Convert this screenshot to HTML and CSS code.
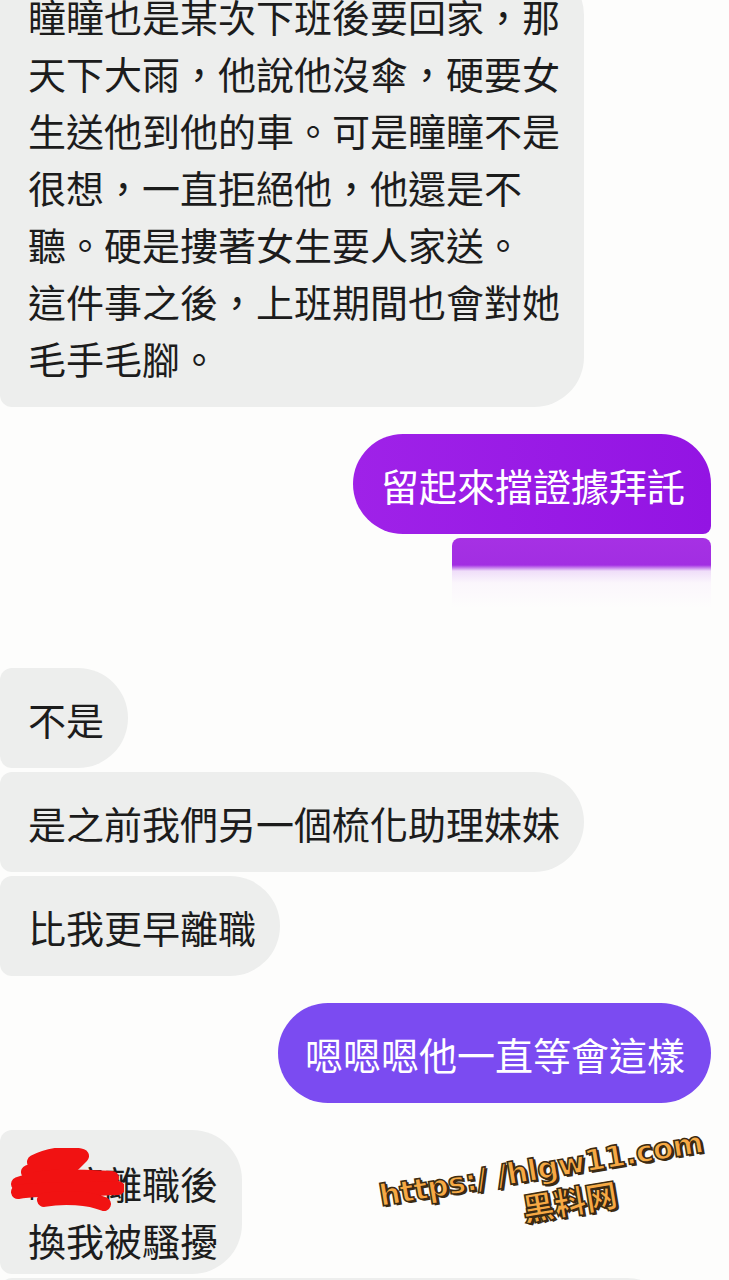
FILE: index.html
```html
<!DOCTYPE html>
<html lang="zh-Hant">
<head>
  <meta charset="UTF-8">
  <title>聊天紀錄</title>
  <link rel="stylesheet" href="styles.css">
</head>
<body>

<div class="screen">
  <div class="chat">

    <div class="group in">
      <div class="bubble gray">瞳瞳也是某次下班後要回家，那<br>天下大雨，他說他沒傘，硬要女<br>生送他到他的車。可是瞳瞳不是<br>很想，一直拒絕他，他還是不<br>聽。硬是摟著女生要人家送。<br>這件事之後，上班期間也會對她<br>毛手毛腳。</div>
    </div>

    <div class="group out">
      <div class="bubble violet">留起來擋證據拜託</div>
      <div class="smear"></div>
    </div>

    <div class="group in">
      <div class="bubble gray">不是</div>
      <div class="bubble gray">是之前我們另一個梳化助理妹妹</div>
      <div class="bubble gray">比我更早離職</div>
    </div>

    <div class="group out">
      <div class="bubble indigo">嗯嗯嗯他一直等會這樣</div>
    </div>

    <div class="group in">
      <div class="bubble gray tight">
        瞳瞳離職後<br>換我被騷擾
        <svg class="scribble" width="120" height="70" viewBox="0 0 120 70">
          <path d="M30 14 C45 6 65 4 78 8 L70 16 C55 14 40 18 24 24" />
          <path d="M14 36 C40 26 70 28 108 30 C90 34 60 36 30 40" />
          <path d="M14 44 C40 40 80 42 114 40" />
          <path d="M40 52 C60 48 85 50 100 56" />
        </svg>
      </div>
      <div class="bubble gray wide"></div>
    </div>

  </div>

  <div class="watermark">
    <div class="wm-url">https:/ /hlgw11.com</div>
    <div class="wm-name">黑料网</div>
  </div>
</div>

</body>
</html>
```

FILE: styles.css
```css
body {
  margin: 0;
  background: #fdfdfc;
  font-family: "Noto Sans CJK TC", "Noto Sans", sans-serif;
  overflow: hidden;
}

.screen {
  position: relative;
  width: 729px;
  height: 1280px;
  overflow: hidden;
}

.chat {
  display: flex;
  flex-direction: column;
  gap: 27px;
  margin-top: -35px;
}

.group {
  display: flex;
  flex-direction: column;
  gap: 4px;
}

.group.in {
  align-items: flex-start;
}

.group.out {
  align-items: flex-end;
  padding-right: 18px;
}

/* Bubbles */
.bubble {
  position: relative;
  font-size: 38px;
  line-height: 57px;
  padding: 21.5px 24px 21.5px 28px;
  white-space: nowrap;
}

.gray {
  background: #edeeed;
  color: #1c1c1c;
  border-radius: 12px 50px 50px 12px;
}

.violet {
  background: linear-gradient(90deg, #9f22e8, #9314e3);
  color: #ffffff;
  border-radius: 50px 50px 8px 50px;
  padding-right: 26px;
}

.indigo {
  background: #7b4bf1;
  color: #ffffff;
  border-radius: 50px;
  padding-left: 27px;
  padding-right: 26px;
}

.tight {
  padding-top: 24px;
  padding-bottom: 6px;
}

.wide {
  width: 677px;
  height: 100px;
  box-sizing: border-box;
  border-radius: 12px 50px 50px 12px;
}

.smear {
  width: 259px;
  height: 103px;
  border-radius: 8px 8px 0 0;
  background: linear-gradient(to bottom, #a631e4 0, #a22ee2 27px, rgba(228, 196, 246, 0.55) 33px, rgba(248, 236, 252, 0.4) 45px, rgba(255, 255, 255, 0) 70px);
}

.scribble {
  position: absolute;
  left: 4px;
  top: 18px;
}

.scribble path {
  fill: none;
  stroke: #f11212;
  stroke-width: 14;
  stroke-linecap: round;
  stroke-linejoin: round;
}

/* Watermark */
.watermark {
  position: absolute;
  left: 358px;
  top: 1152px;
  width: 372px;
  text-align: center;
  transform: rotate(-9.5deg);
  font-family: "DejaVu Sans", sans-serif;
  font-weight: bold;
  color: #f7a944;
  -webkit-text-stroke: 1.5px #3b2a12;
  text-shadow: 2px 2px 0 #3b2a12;
}

.wm-url {
  font-size: 30px;
  line-height: 34px;
  letter-spacing: -0.5px;
}

.wm-name {
  font-family: "Noto Sans CJK SC", sans-serif;
  font-weight: 900;
  font-size: 32px;
  line-height: 36px;
  padding-left: 46px;
}
```
